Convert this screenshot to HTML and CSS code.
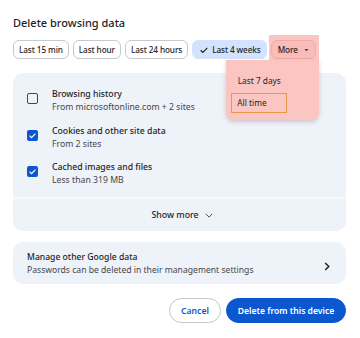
FILE: index.html
```html
<!DOCTYPE html>
<html>
<head>
<meta charset="utf-8">
<link rel="stylesheet" href="styles.css">
</head>
<body>
<div class="dialog">
  <h1 class="title">Delete browsing data</h1>
  <div class="chips">
    <span class="chip">Last 15 min</span>
    <span class="chip">Last hour</span>
    <span class="chip">Last 24 hours</span>
    <span class="chip selected"><svg class="tick" viewBox="0 0 12 12" width="10" height="10"><path d="M2 6.3l2.6 2.6L10 3.5" fill="none" stroke="#1f1f1f" stroke-width="1.4"/></svg>Last 4 weeks</span>
    <span class="more-wrap">
      <span class="chip more">More <svg class="caret" viewBox="0 0 6 4" width="5" height="4"><path d="M0.5 0.8h5L3 3.5z" fill="#444"/></svg></span>
      <div class="menu">
        <div class="menu-item">Last 7 days</div>
        <div class="menu-item focused">All time</div>
      </div>
    </span>
  </div>

  <div class="card list">
    <div class="rows">
      <div class="row">
        <span class="box"></span>
        <div class="texts">
          <div class="row-title">Browsing history</div>
          <div class="row-sub">From microsoftonline.com + 2 sites</div>
        </div>
      </div>
      <div class="row">
        <span class="box checked"><svg viewBox="0 0 12 12" width="11" height="11"><path d="M2.8 6.2l2.1 2.1 4.3-4.4" fill="none" stroke="#fff" stroke-width="1.3"/></svg></span>
        <div class="texts">
          <div class="row-title">Cookies and other site data</div>
          <div class="row-sub">From 2 sites</div>
        </div>
      </div>
      <div class="row">
        <span class="box checked"><svg viewBox="0 0 12 12" width="11" height="11"><path d="M2.8 6.2l2.1 2.1 4.3-4.4" fill="none" stroke="#fff" stroke-width="1.3"/></svg></span>
        <div class="texts">
          <div class="row-title">Cached images and files</div>
          <div class="row-sub">Less than 319 MB</div>
        </div>
      </div>
    </div>
    <div class="show-more">Show more <svg viewBox="0 0 10 6" width="8" height="5"><path d="M1 1l4 4 4-4" fill="none" stroke="#444" stroke-width="1.2"/></svg></div>
  </div>

  <div class="card manage">
    <div class="texts">
      <div class="row-title">Manage other Google data</div>
      <div class="row-sub">Passwords can be deleted in their management settings</div>
    </div>
    <svg class="chev" viewBox="0 0 6 10" width="6" height="9"><path d="M1 1l4 4-4 4" fill="none" stroke="#1f1f1f" stroke-width="1.6"/></svg>
  </div>

  <div class="actions">
    <button class="btn cancel">Cancel</button>
    <button class="btn primary">Delete from this device</button>
  </div>
</div>
</body>
</html>
```

FILE: styles.css
```css
* { box-sizing: border-box; }
html, body { margin: 0; padding: 0; background: #fff; }
body {
  width: 360px;
  height: 338px;
  overflow: hidden;
  font-family: "Noto Sans", "Open Sans", sans-serif;
  color: #1f1f1f;
}
.dialog {
  padding: 14px 14px 0 13px;
}
.title {
  margin: 0;
  font-size: 11px;
  font-weight: 500;
  line-height: 17px;
  height: 26px;
}
.chips {
  display: flex;
  gap: 4px;
  height: 19px;
}
.chip {
  display: inline-flex;
  align-items: center;
  height: 19px;
  padding: 0 5px;
  border: 1px solid #c7c9cc;
  border-radius: 6px;
  font-size: 8.2px;
  font-weight: 500;
  letter-spacing: -0.1px;
  white-space: nowrap;
  background: #fff;
}
.chip.selected {
  background: #d3e3fd;
  border-color: #d3e3fd;
  padding: 0 5px 0 6px;
}
.tick { margin-right: 3px; }
.more-wrap {
  position: relative;
  display: inline-flex;
}
.more-wrap::before {
  content: "";
  position: absolute;
  left: -2px;
  right: -3px;
  top: -5px;
  bottom: -1px;
  background: #fbc6c2;
}
.chip.more {
  position: relative;
  background: #f9bcb8;
  border-color: #efaaa6;
  padding: 0 6px 0 6px;
  gap: 6px;
}
.menu {
  position: absolute;
  top: 20px;
  right: -3px;
  width: 93px;
  height: 60px;
  background: #fbc6c2;
  border-radius: 0 0 8px 8px;
  box-shadow: 0 2px 4px rgba(120, 60, 60, 0.25);
  padding: 12px 0 0 5px;
  z-index: 5;
}
.menu-item {
  font-size: 8.3px;
  height: 20px;
  line-height: 18px;
  padding-left: 7px;
  width: 56px;
}
.menu-item.focused {
  margin-top: 1px;
  border: 1.5px solid #e8954d;
  padding-left: 5.5px;
}
.card {
  background: #eef2f9;
  border-radius: 10px;
}
.list {
  margin-top: 14px;
  overflow: hidden;
}
.rows {
  padding: 15px 0 0 14px;
  height: 123px;
}
.row {
  display: flex;
  align-items: flex-start;
  height: 36.5px;
}
.box {
  width: 11px;
  height: 11px;
  margin-top: 5px;
  border: 1.5px solid #444746;
  border-radius: 2px;
  flex: none;
  display: flex;
}
.box.checked {
  background: #0b57d0;
  border: none;
}
.texts { margin-left: 14px; }
.manage .texts { margin-left: 0; }
.row-title {
  font-size: 8.7px;
  line-height: 13px;
  font-weight: 500;
  color: #1f1f1f;
}
.row-sub {
  font-size: 8.7px;
  line-height: 13px;
  color: #474747;
}
.show-more {
  margin-top: 1px;
  background: #eef2f9;
  border-top: 2px solid #f7f9fc;
  height: 34px;
  display: flex;
  align-items: center;
  justify-content: center;
  gap: 6px;
  font-size: 8.8px;
  font-weight: 500;
  color: #1f1f1f;
  padding-left: 5px;
}
.manage {
  margin-top: 11px;
  height: 42px;
  display: flex;
  align-items: center;
  justify-content: space-between;
  padding: 1px 16px 0 14px;
}
.manage .row-title { font-size: 8.6px; }
.manage .row-sub { font-size: 8.6px; }
.chev { margin-top: 6px; }
.actions {
  display: flex;
  justify-content: flex-end;
  gap: 5px;
  margin-top: 14px;
  padding-right: 0;
}
.btn {
  font-family: "Noto Sans", "Open Sans", sans-serif;
  height: 25px;
  border-radius: 13px;
  font-size: 8.6px;
  font-weight: 600;
  padding: 0 6px;
  white-space: nowrap;
  cursor: pointer;
}
.cancel {
  width: 52px;
  background: #fff;
  border: 1px solid #c4c7c5;
  color: #0b57d0;
}
.primary {
  width: 120px;
  background: #0b57d0;
  border: 1px solid #0b57d0;
  color: #fff;
}
```
